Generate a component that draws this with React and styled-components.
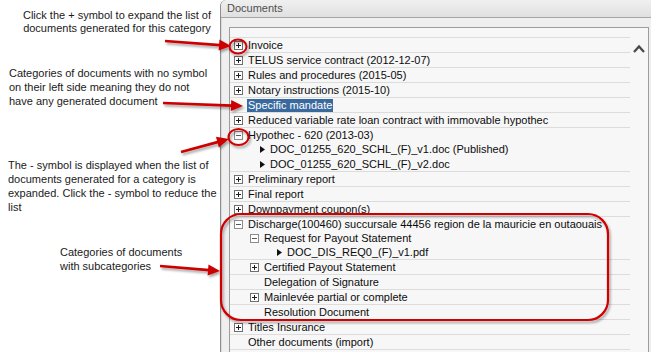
import React from 'react';
import styled, { createGlobalStyle } from 'styled-components';

const Global = createGlobalStyle`
  html, body { margin: 0; padding: 0; background: #ffffff; }
  body {
    width: 651px;
    height: 352px;
    overflow: hidden;
    font-family: "Liberation Sans", Arial, sans-serif;
  }
`;

const Page = styled.div`
  position: relative;
  display: flex;
  width: 651px;
  height: 352px;
  overflow: hidden;
  background: #ffffff;
`;

const Notes = styled.aside`
  width: 220px;
  flex: none;
  display: flex;
  flex-direction: column;
`;

const Note = styled.p`
  margin: ${(p) => p.$top}px 0 0 ${(p) => p.$left}px;
  font-size: 11px;
  line-height: ${(p) => p.$lh || 14}px;
  color: #1a1a1a;
  white-space: nowrap;
  text-align: ${(p) => p.$align || 'left'};
  width: ${(p) => (p.$width ? `${p.$width}px` : 'auto')};
`;

const Panel = styled.section`
  flex: 1;
  display: flex;
  flex-direction: column;
  border-left: 1px solid #8e8e8e;
  border-top-left-radius: 6px;
  background: #efefef;
  box-shadow: inset 1px 0 0 #dadada;
  min-width: 0;
`;

const Header = styled.header`
  height: 18px;
  flex: none;
  box-sizing: border-box;
  padding-left: 6px;
  border-top-left-radius: 6px;
  border-bottom: 1px solid #a6a6a6;
  background: linear-gradient(#f0f0f0, #e0e0e0);
  font-size: 11px;
  line-height: 17px;
  color: #505050;
`;

const Body = styled.div`
  flex: 1;
  display: flex;
  padding: 9px 2px 0 8px;
  min-height: 0;
`;

const ListBox = styled.div`
  flex: 1;
  display: flex;
  border: 1px solid #9d9d9d;
  border-bottom: none;
  background: #f7f7f7;
`;

const Tree = styled.div`
  width: 400px;
  flex: none;
  display: flex;
  flex-direction: column;
`;

const Spacer = styled.div`
  height: 9px;
  flex: none;
  border-bottom: 1px solid #dcdcdc;
`;

const Row = styled.div`
  height: ${(p) => p.$h || 14}px;
  flex: none;
  display: flex;
  align-items: flex-end;
  padding-left: ${(p) => p.$pad}px;
  border-bottom: ${(p) => (p.$sep ? '1px solid #dcdcdc' : 'none')};
  font-size: 11px;
  color: #0c0c0c;
  white-space: nowrap;
`;

const Label = styled.span`
  display: block;
  line-height: 13px;
  padding: 0 1px;
  margin-left: -1px;
  background: ${(p) => (p.$selected ? '#3a699e' : 'transparent')};
  color: ${(p) => (p.$selected ? '#ffffff' : 'inherit')};
`;

const Icon = styled.svg`
  flex: none;
  display: block;
  margin: 0 ${(p) => p.$gap}px ${(p) => p.$bottom}px 0;
`;

const ScrollCol = styled.div`
  flex: 1;
  display: flex;
  justify-content: center;
  align-items: flex-start;
  padding: 16px 0 0 0;
`;

const Overlay = styled.svg`
  position: absolute;
  left: 0;
  top: 0;
  pointer-events: none;
`;

function Toggle({ open }) {
  const stroke = open ? '#8c8c8c' : '#6f6f6f';
  const line = open ? '#5a5a5a' : '#1e1e1e';
  return (
    <Icon $gap={5} $bottom={2} width="9" height="9" viewBox="0 0 9 9" shapeRendering="crispEdges">
      <rect x="0.5" y="0.5" width="8" height="8" fill="#ffffff" stroke={stroke} />
      <line x1="2" y1="4.5" x2="7" y2="4.5" stroke={line} />
      {!open && <line x1="4.5" y1="2" x2="4.5" y2="7" stroke={line} />}
    </Icon>
  );
}

function Bullet() {
  return (
    <Icon $gap={5} $bottom={3} width="5" height="7" viewBox="0 0 5 7">
      <polygon points="0,0 5,3.5 0,7" fill="#111111" />
    </Icon>
  );
}

const rows = [
  { label: 'Invoice', pad: 4, kind: 'closed', sep: true },
  { label: 'TELUS service contract (2012-12-07)', pad: 4, kind: 'closed', sep: true },
  { label: 'Rules and procedures (2015-05)', pad: 4, kind: 'closed', sep: true },
  { label: 'Notary instructions (2015-10)', pad: 4, kind: 'closed', sep: true },
  { label: 'Specific mandate', pad: 18, sep: true, selected: true },
  { label: 'Reduced variable rate loan contract with immovable hypothec', pad: 4, kind: 'closed', sep: true },
  { label: 'Hypothec - 620 (2013-03)', pad: 4, kind: 'open' },
  { label: 'DOC_01255_620_SCHL_(F)_v1.doc (Published)', pad: 30, kind: 'doc' },
  { label: 'DOC_01255_620_SCHL_(F)_v2.doc', pad: 30, kind: 'doc', sep: true, h: 15 },
  { label: 'Preliminary report', pad: 4, kind: 'closed', sep: true },
  { label: 'Final report', pad: 4, kind: 'closed', sep: true },
  { label: 'Downpayment coupon(s)', pad: 4, kind: 'closed', sep: true },
  { label: 'Discharge(100460) succursale 44456 region de la mauricie en outaouais', pad: 4, kind: 'open' },
  { label: 'Request for Payout Statement', pad: 20, kind: 'open' },
  { label: 'DOC_DIS_REQ0_(F)_v1.pdf', pad: 47, kind: 'doc', sep: true },
  { label: 'Certified Payout Statement', pad: 20, kind: 'closed', sep: true },
  { label: 'Delegation of Signature', pad: 34, sep: true },
  { label: 'Mainlevée partial or complete', pad: 20, kind: 'closed', sep: true },
  { label: 'Resolution Document', pad: 34, sep: true },
  { label: 'Titles Insurance', pad: 4, kind: 'closed', sep: true },
  { label: 'Other documents (import)', pad: 18, sep: true },
];

function Arrow({ from, to }) {
  const [x1, y1] = from;
  const [x2, y2] = to;
  const dx = x2 - x1;
  const dy = y2 - y1;
  const len = Math.hypot(dx, dy);
  const ux = dx / len;
  const uy = dy / len;
  const hl = 12;
  const hw = 5.5;
  const bx = x2 - ux * hl;
  const by = y2 - uy * hl;
  const pts = [
    [x2, y2],
    [bx - uy * hw, by + ux * hw],
    [bx + uy * hw, by - ux * hw],
  ]
    .map((p) => p.join(','))
    .join(' ');
  return (
    <g>
      <line x1={x1} y1={y1} x2={bx + ux} y2={by + uy} stroke="#cc0000" strokeWidth="2.6" />
      <polygon points={pts} fill="#cc0000" />
    </g>
  );
}

export default function App() {
  return (
    <>
      <Global />
      <Page>
        <Notes>
          <Note $top={9} $left={21} $lh={13} $width={192} $align="center">
            Click the + symbol to expand the list of
            <br />
            documents generated for this category
          </Note>
          <Note $top={31} $left={9}>
            Categories of documents with no symbol
            <br />
            on their left side meaning they do not
            <br />
            have any generated document
          </Note>
          <Note $top={50} $left={8}>
            The - symbol is displayed when the list of
            <br />
            documents generated for a category is
            <br />
            expanded. Click the - symbol to reduce the
            <br />
            list
          </Note>
          <Note $top={31} $left={60}>
            Categories of documents
            <br />
            with subcategories
          </Note>
        </Notes>
        <Panel>
          <Header>Documents</Header>
          <Body>
            <ListBox>
              <Tree>
                <Spacer />
                {rows.map((r) => (
                  <Row key={r.label} $pad={r.pad} $sep={r.sep} $h={r.h}>
                    {r.kind === 'closed' && <Toggle />}
                    {r.kind === 'open' && <Toggle open />}
                    {r.kind === 'doc' && <Bullet />}
                    <Label $selected={r.selected}>{r.label}</Label>
                  </Row>
                ))}
              </Tree>
              <ScrollCol>
                <svg width="12" height="9" viewBox="0 0 12 9">
                  <polyline points="1,8 6,2.5 11,8" fill="none" stroke="#4a4a4a" strokeWidth="2.3" />
                </svg>
              </ScrollCol>
            </ListBox>
          </Body>
        </Panel>
        <Overlay width="651" height="352" viewBox="0 0 651 352">
          <defs>
            <filter id="sh" x="-20%" y="-20%" width="140%" height="160%">
              <feDropShadow dx="1.5" dy="2.2" stdDeviation="1.3" floodColor="#000000" floodOpacity="0.35" />
            </filter>
          </defs>
          <g filter="url(#sh)">
            <Arrow from={[165, 41]} to={[231, 46]} />
            <ellipse cx="238" cy="46.5" rx="8.5" ry="7" fill="none" stroke="#d10000" strokeWidth="2" />
            <Arrow from={[163, 103]} to={[243, 106]} />
            <Arrow from={[181, 152]} to={[229, 139]} />
            <ellipse cx="238.5" cy="137" rx="10" ry="8" fill="none" stroke="#d10000" strokeWidth="2" />
            <Arrow from={[160, 266]} to={[220, 271]} />
            <rect x="221" y="214" width="387" height="106" rx="20" ry="20" fill="none" stroke="#d10000" strokeWidth="2.2" />
          </g>
        </Overlay>
      </Page>
    </>
  );
}
